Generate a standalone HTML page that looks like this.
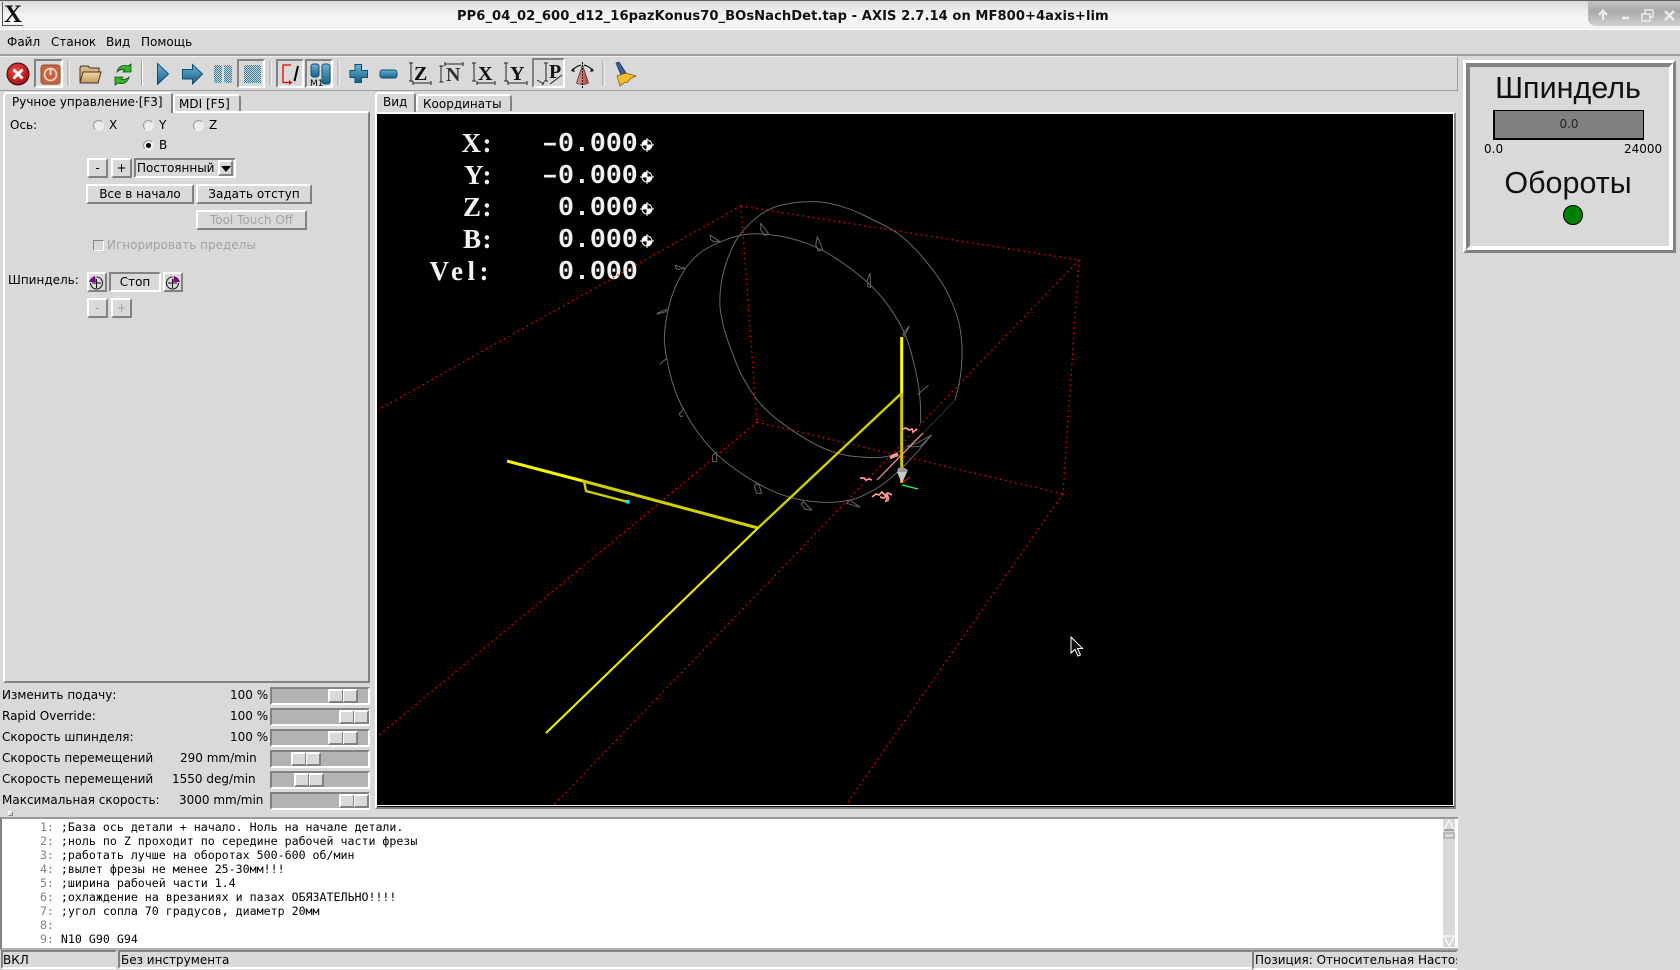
<!DOCTYPE html>
<html><head><meta charset="utf-8">
<style>
html,body{margin:0;padding:0;width:1680px;height:970px;overflow:hidden;background:#d9d9d9;font-family:"DejaVu Sans","Liberation Sans",sans-serif;font-size:12px;color:#000}
div{box-sizing:border-box}
.a{position:absolute}
.t{position:absolute;white-space:nowrap;line-height:16px;height:16px}
.r{border:2px solid;border-color:#fff #828282 #828282 #fff;background:#d9d9d9;position:absolute;text-align:center;line-height:17px;white-space:nowrap}
.s{border:2px solid;border-color:#828282 #fff #fff #828282;background:#d9d9d9;position:absolute}
.d{color:#a3a3a3}
.rad{position:absolute;width:11px;height:11px;border-radius:50%;background:#ececec;border:1px solid;border-color:#9a9a9a #eee #eee #9a9a9a}
.tr{position:absolute;left:270px;width:100px;height:18px;background:#b3b3b3;border:2px solid;border-color:#828282 #fff #fff #828282}
.th{position:absolute;top:0;width:30px;height:14px;background:#d9d9d9;border:2px solid;border-color:#fff #828282 #828282 #fff}
.th:after{content:"";position:absolute;left:12px;top:-1px;width:2px;height:12px;background:linear-gradient(90deg,#828282 50%,#fff 50%)}
.tab{position:absolute;border:2px solid #fff;border-right-color:#828282;border-bottom:0;border-radius:4px 4px 0 0;background:#d9d9d9;white-space:nowrap;line-height:16px}
pre{margin:0;font:11.62px/14px "DejaVu Sans Mono","Liberation Mono",monospace;position:absolute;left:5px;top:820px;color:#000}
pre i{font-style:normal;color:#808080}
.dl{position:absolute;height:32px;font:bold 26.6px/32px 'Liberation Mono',monospace;color:#f2f2f2;white-space:pre}
.ds{position:absolute;height:32px;font:bold 27px/32px 'Liberation Serif',serif;color:#f2f2f2;white-space:pre;text-align:right;width:80px;left:413px;letter-spacing:1.5px}
</style></head><body>

<!-- title bar -->
<div class="a" style="left:0;top:0;width:1680px;height:30px;background:linear-gradient(#dcdcdc,#f6f6f6 60%,#f2f2f2);border-top:1px solid #5c5c5c;border-bottom:1px solid #fff"></div>
<div class="t" style="left:457px;top:7px;font-weight:bold;font-size:13.1px;color:#111;letter-spacing:.05px;line-height:17px;height:17px;margin-top:1px">PP6_04_02_600_d12_16pazKonus70_BOsNachDet.tap - AXIS 2.7.14 on MF800+4axis+lim</div>
<div class="a" style="left:1588px;top:1px;width:92px;height:25px;background:linear-gradient(#c4c4c4,#a9a9a9 40%,#d2d2d2);border-radius:0 0 0 8px;border-left:1px solid #bbb"></div>
<div class="a" style="left:2px;top:2px;font:bold 25px/25px 'Liberation Serif',serif;color:#111;border-left:1px solid #555;border-bottom:1px solid #555;padding:0 1px 0 1px;height:24px">X</div>

<!-- menubar -->
<div class="a" style="left:0;top:30px;width:1680px;height:26px;border-bottom:2px solid #9c9c9c"></div>
<div class="t" style="left:7px;top:34px">Файл</div>
<div class="t" style="left:51px;top:34px">Станок</div>
<div class="t" style="left:106px;top:34px">Вид</div>
<div class="t" style="left:141px;top:34px">Помощь</div>

<!-- toolbar frame -->
<div class="a" style="left:0;top:56px;width:1458px;height:35px;border-bottom:1px solid #9c9c9c;border-right:1px solid #9c9c9c;border-top:1px solid #f0f0f0"></div>
<div class="s" style="left:34px;top:59px;width:29px;height:29px"></div>
<div class="s" style="left:237px;top:59px;width:28px;height:29px"></div>
<div class="s" style="left:276px;top:59px;width:28px;height:29px"></div>
<div class="s" style="left:305px;top:59px;width:28px;height:29px"></div>
<div class="s" style="left:532px;top:58px;width:33px;height:30px"></div>

<!-- left notebook -->
<div class="a" style="left:3px;top:111px;width:367px;height:572px;border:2px solid;border-color:#fff #828282 #828282 #fff"></div>
<div class="tab" style="left:3px;top:92px;width:170px;height:21px;padding:0 0 0 7px">Ручное управление·[F3]</div>
<div class="tab" style="left:173px;top:94px;width:68px;height:17px;padding:0 0 0 4px">MDI [F5]</div>

<div class="t" style="left:10px;top:117px">Ось:</div>
<div class="rad" style="left:93px;top:120px"></div><div class="t" style="left:109px;top:117px">X</div>
<div class="rad" style="left:143px;top:120px"></div><div class="t" style="left:159px;top:117px">Y</div>
<div class="rad" style="left:193px;top:120px"></div><div class="t" style="left:209px;top:117px">Z</div>
<div class="rad" style="left:143px;top:140px"></div><div class="t" style="left:159px;top:137px">B</div>
<div class="a" style="left:146px;top:143px;width:5px;height:5px;border-radius:50%;background:#000"></div>

<div class="r" style="left:87px;top:158px;width:21px;height:20px">-</div>
<div class="r" style="left:111px;top:158px;width:21px;height:20px">+</div>
<div class="s" style="left:134px;top:158px;width:102px;height:20px;border-color:#828282 #fff #fff #828282"></div>
<div class="t" style="left:137px;top:160px">Постоянный</div>
<div class="r" style="left:218px;top:160px;width:15px;height:16px"></div>
<div class="a" style="left:221px;top:166px;width:0;height:0;border:5px solid transparent;border-top:6px solid #000;border-bottom:0"></div>

<div class="r" style="left:86px;top:184px;width:108px;height:20px">Все в начало</div>
<div class="r" style="left:196px;top:184px;width:116px;height:20px">Задать отступ</div>
<div class="r d" style="left:196px;top:210px;width:111px;height:20px">Tool Touch Off</div>
<div class="a" style="left:93px;top:240px;width:11px;height:11px;border:1px solid;border-color:#888 #fff #fff #888"></div>
<div class="t d" style="left:107px;top:237px">Игнорировать пределы</div>

<div class="t" style="left:8px;top:272px">Шпиндель:</div>
<div class="r" style="left:87px;top:272px;width:20px;height:20px"></div>
<div class="s" style="left:109px;top:272px;width:52px;height:20px;text-align:center;line-height:17px">Стоп</div>
<div class="r" style="left:163px;top:272px;width:20px;height:20px"></div>
<div class="r d" style="left:87px;top:298px;width:21px;height:20px">-</div>
<div class="r d" style="left:111px;top:298px;width:21px;height:20px">+</div>

<!-- sliders -->
<div class="t" style="left:2px;top:687px">Изменить подачу:</div><div class="t" style="left:230px;top:687px">100 %</div>
<div class="tr" style="top:687px"><div class="th" style="left:56px"></div></div>
<div class="t" style="left:2px;top:708px">Rapid Override:</div><div class="t" style="left:230px;top:708px">100 %</div>
<div class="tr" style="top:708px"><div class="th" style="left:67px"></div></div>
<div class="t" style="left:2px;top:729px">Скорость шпинделя:</div><div class="t" style="left:230px;top:729px">100 %</div>
<div class="tr" style="top:729px"><div class="th" style="left:56px"></div></div>
<div class="t" style="left:2px;top:750px">Скорость перемещений</div><div class="t" style="left:180px;top:750px">290 mm/min</div>
<div class="tr" style="top:750px"><div class="th" style="left:19px"></div></div>
<div class="t" style="left:2px;top:771px">Скорость перемещений</div><div class="t" style="left:172px;top:771px">1550 deg/min</div>
<div class="tr" style="top:771px"><div class="th" style="left:22px"></div></div>
<div class="t" style="left:2px;top:792px">Максимальная скорость:</div><div class="t" style="left:179px;top:792px">3000 mm/min</div>
<div class="tr" style="top:792px"><div class="th" style="left:67px"></div></div>

<!-- center notebook -->
<div class="tab" style="left:375px;top:92px;width:41px;height:21px;padding:0 0 0 6px">Вид</div>
<div class="tab" style="left:416px;top:94px;width:96px;height:17px;padding:0 0 0 5px">Координаты</div>
<div class="a" style="left:375px;top:112px;width:1081px;height:697px;background:#000;border:2px solid;border-color:#fff #828282 #828282 #fff"></div>
<div class="a" style="left:1453px;top:114px;width:1px;height:692px;background:#fff"></div>
<div class="a" style="left:377px;top:805px;width:1077px;height:1px;background:#fff"></div>

<!-- DRO -->
<div class="ds" style="top:127px">X:</div>
<div class="ds" style="top:159px">Y:</div>
<div class="ds" style="top:191px">Z:</div>
<div class="ds" style="top:223px">B:</div>
<div class="ds" style="top:255px;letter-spacing:4.5px">Vel:</div>
<div class="dl" style="left:542px;top:128px">–0.000</div>
<div class="dl" style="left:542px;top:160px">–0.000</div>
<div class="dl" style="left:558px;top:192px">0.000</div>
<div class="dl" style="left:558px;top:224px">0.000</div>
<div class="dl" style="left:558px;top:256px">0.000</div>

<!-- right panel -->
<div class="a" style="left:1463px;top:60px;width:213px;height:193px;border:3px solid;border-color:#fff #828282 #828282 #fff"></div>
<div class="a" style="left:1466px;top:63px;width:207px;height:187px;border:4px solid;border-color:#828282 #fff #fff #828282"></div>
<div class="a" style="left:1468px;top:70px;width:200px;text-align:center;font:30.5px/36px 'Liberation Sans',sans-serif;color:#111">Шпиндель</div>
<div class="a" style="left:1493px;top:110px;width:151px;height:30px;background:#808080;border:1px solid #000;border-left-width:2px;border-bottom-width:2px;text-align:center;line-height:27px;color:#222">0.0</div>
<div class="t" style="left:1484px;top:141px">0.0</div>
<div class="t" style="left:1624px;top:141px">24000</div>
<div class="a" style="left:1468px;top:165px;width:200px;text-align:center;font:30.5px/36px 'Liberation Sans',sans-serif;color:#111">Обороты</div>
<div class="a" style="left:1563px;top:205px;width:20px;height:20px;border-radius:50%;background:#008000;border:1px solid #000"></div>

<!-- gcode -->
<div class="a" style="left:8px;top:811px;width:5px;height:5px;border:1px solid;border-color:#fff #828282 #828282 #fff"></div>
<div class="a" style="left:0;top:817px;width:1458px;height:133px;background:#fff;border-top:2px solid #9a9a9a;border-left:2px solid #828282;border-bottom:2px solid #b0b0b0"></div>
<pre><i>     1: </i>;База ось детали + начало. Ноль на начале детали.
<i>     2: </i>;ноль по Z проходит по середине рабочей части фрезы
<i>     3: </i>;работать лучше на оборотах 500-600 об/мин
<i>     4: </i>;вылет фрезы не менее 25-30мм!!!
<i>     5: </i>;ширина рабочей части 1.4
<i>     6: </i>;охлаждение на врезаниях и пазах ОБЯЗАТЕЛЬНО!!!!
<i>     7: </i>;угол сопла 70 градусов, диаметр 20мм
<i>     8: </i>
<i>     9: </i>N10 G90 G94</pre>
<div class="a" style="left:1443px;top:819px;width:12px;height:128px;background:#d9d9d9"></div>

<!-- status -->
<div class="a" style="left:0;top:950px;width:1458px;height:20px;background:#d9d9d9"></div>
<div class="a" style="left:1px;top:950px;width:116px;height:19px;border:2px solid;border-color:#828282 #d9d9d9 #fff #828282"></div>
<div class="a" style="left:118px;top:950px;width:1135px;height:19px;border:2px solid;border-color:#828282 #d9d9d9 #fff #828282"></div>
<div class="a" style="left:1252px;top:950px;width:206px;height:20px;border:2px solid;border-color:#828282 #d9d9d9 #fff #828282"></div>
<div class="t" style="left:3px;top:952px">ВКЛ</div>
<div class="t" style="left:121px;top:952px">Без инструмента</div>
<div class="t" style="left:1255px;top:952px;width:202px;overflow:hidden">Позиция: Относительная Настоящая</div>

<!-- drawing overlay -->
<svg class="a" style="left:0;top:0" width="1680" height="970" viewBox="0 0 1680 970" fill="none">
<defs>
<pattern id="dith" width="2" height="2" patternUnits="userSpaceOnUse"><rect width="2" height="2" fill="#d9d9d9"/><rect width="1" height="1" fill="#2d7a9e"/><rect x="1" y="1" width="1" height="1" fill="#2d7a9e"/></pattern>
<linearGradient id="bl" x1="0" y1="0" x2="0" y2="1"><stop offset="0" stop-color="#6fb2cf"/><stop offset="1" stop-color="#14618a"/></linearGradient>
<radialGradient id="rd" cx=".4" cy=".35" r=".7"><stop offset="0" stop-color="#f04545"/><stop offset="1" stop-color="#a00f12"/></radialGradient>
<linearGradient id="fd" x1="0" y1="0" x2="0" y2="1"><stop offset="0" stop-color="#f2d7a4"/><stop offset="1" stop-color="#c69a5c"/></linearGradient>
<linearGradient id="cn" x1="0" y1="0" x2="1" y2="0"><stop offset="0" stop-color="#e59a92"/><stop offset="1" stop-color="#b5433c"/></linearGradient>
</defs>

<!-- window buttons -->
<g stroke="#f4f4f4" stroke-width="2" opacity=".9">
<path d="M1603 20V11M1599 15l4-4.500 4 4.500" fill="none" stroke-width="2.200"/>
<path d="M1622 18h7" stroke-width="2.500"/>
<path d="M1642 14h8v7h-8zM1645 14v-4h8v7h-3" stroke-width="1.400"/>
<path d="M1665 11l9 9M1674 11l-9 9" stroke-width="2.400"/>
</g>

<!-- toolbar separators -->
<g stroke="#9c9c9c" stroke-width="1">
<path d="M68 61v25M141.500 61v25M270 61v25M338 61v25M603 61v25"/>
</g>
<g stroke="#fff" stroke-width="1">
<path d="M69 61v25M142.500 61v25M271 61v25M339 61v25M604 61v25"/>
</g>

<!-- estop -->
<circle cx="18" cy="74" r="11" fill="url(#rd)" stroke="#3d0a0a" stroke-width="1"/>
<path d="M13.500 69.500l9 9M22.500 69.500l-9 9" stroke="#fff" stroke-width="3"/>
<!-- power -->
<rect x="41" y="65" width="19" height="19" rx="3" fill="#c9643f" stroke="#93492f"/>
<circle cx="50.500" cy="74.500" r="6" stroke="#f3ddd1" stroke-width="1.600"/>
<path d="M50.500 69v6" stroke="#f3ddd1" stroke-width="2"/>
<!-- folder -->
<path d="M80 82V68l1-2h7l2 2h9v4" fill="#d9b681" stroke="#3e3322"/>
<path d="M80 83l3-11h18l-3 11z" fill="url(#fd)" stroke="#3e3322"/>
<!-- reload -->
<path d="M117 72c1-5 6-8 11-6l3-2v8h-8l2-2c-3-1-6 0-8 2z" fill="#37b52f" stroke="#0f4d12" stroke-width=".8"/>
<path d="M129 77c-1 5-6 8-11 6l-3 2v-8h8l-2 2c3 1 6 0 8-2z" fill="#37b52f" stroke="#0f4d12" stroke-width=".8"/>
<!-- run / step -->
<path d="M157.500 63.500l11 10.500-11 10.500z" fill="url(#bl)" stroke="#0f4f70"/>
<path d="M182.500 69.500h10v-5l10 9.500-10 10v-5h-10z" fill="url(#bl)" stroke="#0f4f70"/>
<!-- pause/stop dithered -->
<rect x="214" y="65" width="8" height="18" rx="2" fill="url(#dith)"/>
<rect x="224" y="65" width="8" height="18" rx="2" fill="url(#dith)"/>
<rect x="244" y="65" width="17" height="18" rx="1" fill="url(#dith)"/>
<!-- block delete -->
<path d="M292 82.500h-9V65h8" stroke="#e00000" stroke-width="1.300"/>
<path d="M289 80l3 2.500-3 2.500z" fill="#e00000"/>
<path d="M298 66l-3.500 15" stroke="#000" stroke-width="2"/>
<!-- m1 -->
<rect x="311" y="64" width="8" height="13" rx="2.500" fill="url(#bl)" stroke="#0f4f70"/>
<rect x="322" y="64" width="8" height="20" rx="2.500" fill="url(#bl)" stroke="#0f4f70"/>
<text x="310" y="86" font-family="'DejaVu Sans',sans-serif" font-size="9" fill="#000">M1</text>
<!-- plus minus -->
<path d="M355 64.500h6.500v6h6v7h-6v5h-6.500v-5h-5v-7h5z" fill="url(#bl)" stroke="#0f4f70"/>
<rect x="380" y="70" width="17" height="8" rx="2.500" fill="url(#bl)" stroke="#0f4f70"/>
<!-- views -->
<g stroke="#222" stroke-width="1">
<path d="M409 63h4M411 63v18M409 81h4"/>
<path d="M413 81v4M413 83h18M431 81v4"/>
<path d="M441 66v16M439.500 66h4M439.500 82h4"/>
<path d="M445 64h18M445 62v4M463 62v4"/>
<path d="M472 63h4M474 63v18M472 81h4"/>
<path d="M477 81v4M477 83h18M495 81v4"/>
<path d="M504 63h4M506 63v18M504 81h4"/>
<path d="M508 81v4M508 83h19M527 81v4"/>
<path d="M544 63h4M546 63v18M544 81h4"/>
<path d="M537 80l7 4M542 85l2-3M550 84l12-9" />
</g>
<g font-family="'Liberation Serif',serif" font-weight="bold" font-size="20" fill="#111">
<text x="414" y="80">Z</text>
<text x="446" y="81" fill="#333">N</text>
<text x="478" y="80">X</text>
<text x="510" y="80">Y</text>
<text x="549" y="78">P</text>
</g>
<!-- cone -->
<path d="M582.500 65l-6 18c3 2 9 2 12 0z" fill="url(#cn)" stroke="#4d1f1b" stroke-width=".7"/>
<path d="M582.500 62v26" stroke="#000" stroke-width="1" stroke-dasharray="2 1"/>
<path d="M573 70c2-3 5-4 8-5M592 70c-2-3-5-4-8-5" stroke="#111" stroke-width="1.200"/>
<path d="M571 71l4 1-2-4zM594 71l-4 1 2-4z" fill="#111"/>
<!-- brush -->
<path d="M616 63l3-1 7 11-5 2z" fill="#3a58a8" stroke="#1b2a55" stroke-width=".7"/>
<path d="M617 76l9-3 10 3-6 3-2 3-4 1-4 3z" fill="#efbf2b" stroke="#6e5510" stroke-width=".7"/>

<!-- spindle icons -->
<g stroke="#111" stroke-width="1">
<path d="M96.500 277a6 6 0 1 1-6 6M96.500 279v9M92 283h9"/>
<path d="M172.500 277a6 6 0 1 0 6 6M172.500 279v9M168 283h9"/>
</g>
<path d="M89 282c1-3 3-5 6-6l1 6z" fill="#7a0a7a"/>
<path d="M180 282c-1-3-3-5-6-6l-1 6z" fill="#7a0a7a"/>

<!-- scrollbar -->
<path d="M1449 820l-5 10h10z" fill="#d9d9d9" stroke="#fff" stroke-width="1"/>
<path d="M1444 830h10" stroke="#828282" stroke-width="1.200"/>
<rect x="1444" y="833" width="10" height="5" fill="#d9d9d9" stroke="#9a9a9a"/>
<path d="M1444 936l5 10 5-10z" fill="#d9d9d9" stroke="#fff"/>

<!-- home glyphs -->
<g>
<circle cx="647" cy="145" r="5.500" fill="#fff"/><path d="M647 145v-4.500a4.500 4.500 0 0 1 4.500 4.500zM647 145v4.500a4.500 4.500 0 0 1-4.500-4.500z" fill="#000"/><path d="M647 138v14M640 145h14" stroke="#fff"/>
<circle cx="647" cy="177" r="5.500" fill="#fff"/><path d="M647 177v-4.500a4.500 4.500 0 0 1 4.500 4.500zM647 177v4.500a4.500 4.500 0 0 1-4.500-4.500z" fill="#000"/><path d="M647 170v14M640 177h14" stroke="#fff"/>
<circle cx="647" cy="209" r="5.500" fill="#fff"/><path d="M647 209v-4.500a4.500 4.500 0 0 1 4.500 4.500zM647 209v4.500a4.500 4.500 0 0 1-4.500-4.500z" fill="#000"/><path d="M647 202v14M640 209h14" stroke="#fff"/>
<circle cx="647" cy="241" r="5.500" fill="#fff"/><path d="M647 241v-4.500a4.500 4.500 0 0 1 4.500 4.500zM647 241v4.500a4.500 4.500 0 0 1-4.500-4.500z" fill="#000"/><path d="M647 234v14M640 241h14" stroke="#fff"/>
</g>

<!-- red box -->
<g stroke="#f00" stroke-width="1.400" stroke-dasharray="1.400 3.800">
<path d="M741 206L378 410"/>
<path d="M741 206L1079 260"/>
<path d="M741 206L757 422"/>
<path d="M757 422L1063 494"/>
<path d="M757 422L378 736"/>
<path d="M1079 260L1063 494"/>
<path d="M1079 260L554 805"/>
<path d="M1063 494L846 805"/>
</g>

<!-- grey circles, in 3x zoom coords -->
<g transform="translate(640 190) scale(.33333)" stroke="#666" stroke-width="3" stroke-linejoin="round">
<path d="M842 700L842 670Q842 640 838.500 610Q835 580 827.500 545Q820 510 810 475Q800 440 780 402.500Q760 365 730 327.500Q700 290 660 257.500Q620 225 580 200Q540 175 500 160Q460 145 415 137.500Q370 130 335 131.500Q300 133 257.500 149Q215 165 192.500 180Q170 195 152.500 215Q135 235 120 262.500Q105 290 95 320Q85 350 78.500 390Q72 430 73.500 455Q75 480 80 505Q85 530 92.500 560Q100 590 112.500 620Q125 650 147.500 687.500Q170 725 195 755Q220 785 250 810Q280 835 315 857.500Q350 880 382.500 896Q415 912 447.500 921Q480 930 505 933Q530 936 555 937Q580 938 610 934Q640 930 660 921Q680 912 700 901Q720 890 745 870Q770 850 795 825Q820 800 847.500 767.500L875 735"/>
<path d="M945 630Q960 580 964 535Q968 490 965 455Q962 420 956 395Q950 370 935 335Q920 300 900 270Q880 240 855 210Q830 180 800 152Q770 125 735 107Q700 90 670 75Q640 60 607 50Q575 40 542 36Q510 33 470 37Q430 42 405 51Q380 60 360 75Q340 90 320 110Q300 130 285 157Q270 185 259 217Q248 250 243 285Q238 320 240 350Q243 380 252 415Q262 450 280 497Q295 540 320 582Q345 625 367 648Q390 672 415 691Q440 710 470 730Q500 750 530 765Q560 780 590 789Q620 798 650 800Q680 803 702 803Q725 803 742 799Q760 795 790 777"/>
<path d="M790 777L845 735 945 630" stroke="#2c2c2c"/>
<path d="M362 100L385 130 375 137 362 120ZM532 140L548 178 535 183 527 165ZM690 250L692 292 683 290 683 268ZM808 408L793 440 788 432ZM866 586L833 613M210 135L240 155 220 155 212 148ZM105 226L135 235 110 238ZM52 370L80 358 78 365 52 372ZM58 524L80 505M132 655L118 672 122 680 130 677M230 787L218 795 218 815 230 815ZM350 880L343 890 350 910 365 910 358 888ZM490 935L483 942 495 958 515 960ZM630 930L620 940 660 952ZM830 760L875 735 840 770 800 770Z"/>
</g>

<!-- yellow paths -->
<g stroke-linecap="butt">
<path d="M758 528L583 481" stroke="#cfcf00" stroke-width="3"/>
<path d="M583 481L507 461" stroke="#f5f500" stroke-width="3"/>
<path d="M584 481L586 491 628 502" stroke="#cfcf00" stroke-width="2.400"/>
<path d="M901.700 393L758 528" stroke="#cfcf00" stroke-width="2.400"/>
<path d="M758 528L546 733" stroke="#eded00" stroke-width="2.100"/>
<path d="M901.700 393V483" stroke="#cfc800" stroke-width="3"/>
<path d="M901.700 337V393" stroke="#ff0" stroke-width="3"/>
</g>
<rect x="626" y="500" width="3.500" height="3.500" fill="#0ff"/>

<!-- pink -->
<g stroke="#ff9999" stroke-width="1.700">
<path d="M877 480L923 433" stroke-width="1.200"/>
<path d="M860 478l4 0 2 2 3-1 3 1M903 429l3-1 3 2 3-1 1 3 4-3"/>
<path d="M872 497l4-3 3 1 3-3 3 3 3-2 4 2M880 497l4 1 3-3 2 4M888 495l-2 6 3-1"/>
<path d="M890 458l8-4M892 456l6-1" stroke-width="3"/>
</g>
<path d="M897 472l10 0 1-2-5-3-5 1z" fill="#9a9a9a"/>
<path d="M897 472h10l-5 11z" fill="#c8c8c8"/>
<path d="M902 483l8-6" stroke="#e02020"/>
<path d="M902 485l16 4" stroke="#2bff2b" stroke-width="1.200"/>

<!-- cursor -->
<path d="M1071 637v16l4-3.500 3 6.500 2.500-1-3-6.500h5z" fill="#111" stroke="#fff" stroke-width="1"/>
</svg>
</body></html>
